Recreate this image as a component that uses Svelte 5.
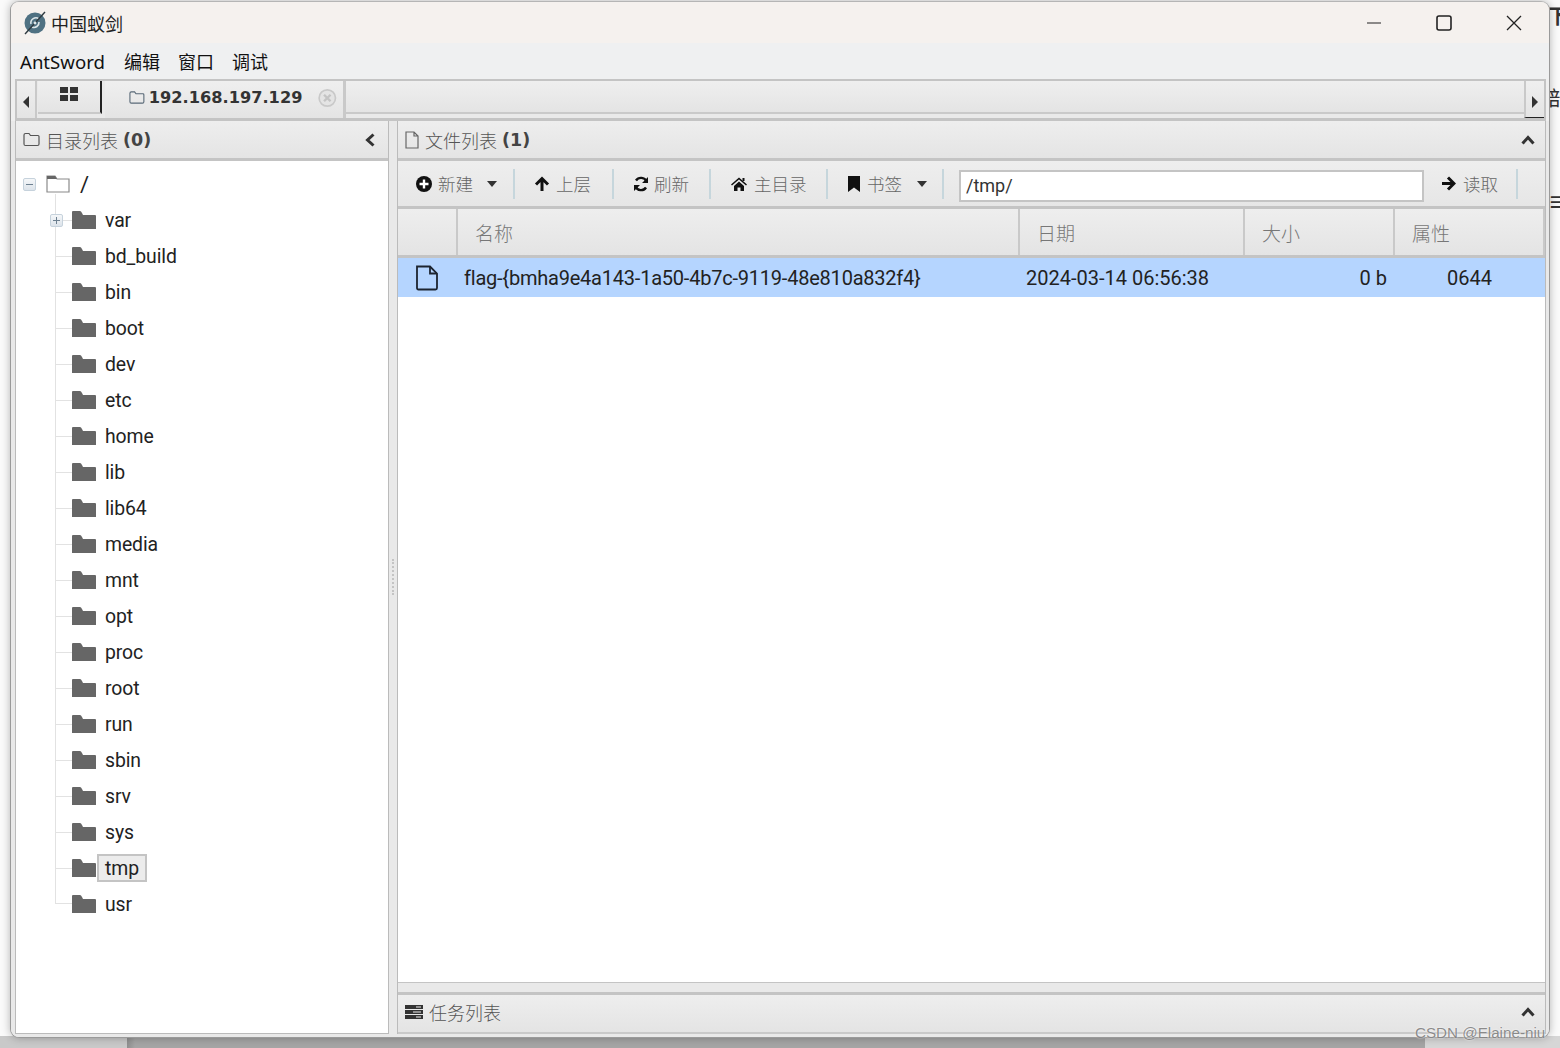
<script>
  const dirs = ['var','bd_build','bin','boot','dev','etc','home','lib','lib64','media','mnt','opt','proc','root','run','sbin','srv','sys','tmp','usr']
  const columns = ['', '名称', '日期', '大小', '属性']
</script>

<div class="desk">
  <div class="peek p1">下</div>
  <div class="peek p2">部</div>
  <div class="peek p3">≡</div>
  <div class="strip"></div>

  <div class="window">
    <div class="titlebar">
      <svg class="logo" viewBox="0 0 24 24" width="24" height="24">
        <circle cx="12" cy="12" r="10.5" fill="#4f7182"/>
        <path d="M8 13a5 5 0 0 1 8-5M16 11a5 5 0 0 1-7 5" fill="none" stroke="#dfe7ea" stroke-width="1.6"/>
        <path d="M2 23 22 1" stroke="#2f3a40" stroke-width="1.4"/>
        <circle cx="12" cy="12" r="1.4" fill="#dfe7ea"/>
      </svg>
      <span class="apptitle">中国蚁剑</span>
      <div class="controls">
        <svg viewBox="0 0 16 16" width="16" height="16"><path d="M1 8h14" stroke="#222" stroke-width="1.2"/></svg>
        <svg viewBox="0 0 16 16" width="16" height="16"><rect x="1" y="1" width="14" height="14" rx="2" fill="none" stroke="#222" stroke-width="1.6"/></svg>
        <svg viewBox="0 0 16 16" width="16" height="16"><path d="M1 1l14 14M15 1 1 15" stroke="#222" stroke-width="1.3"/></svg>
      </div>
    </div>

    <div class="menubar">
      <span class="first">AntSword</span><span>编辑</span><span>窗口</span><span>调试</span>
    </div>

    <div class="tabbar">
      <div class="tabarrow"><svg viewBox="0 0 6 12" width="6" height="12"><path d="M6 0v12L0 6z" fill="#333"/></svg></div>
      <div class="tab home">
        <svg viewBox="0 0 18 16" width="18" height="16"><path d="M0 1h8v6H0zM10 1h8v6h-8zM0 9h8v6H0zM10 9h8v6h-8z" fill="#333"/></svg>
      </div>
      <div class="tab active">
        <svg viewBox="0 0 17 15" width="17" height="15"><path d="M1 3q0-1.500 1.500-1.500H6L7.500 3.500H15q1 0 1 1V12q0 1.500-1.500 1.500h-12Q1 13.500 1 12z" fill="none" stroke="#5a6a78" stroke-width="1.200"/></svg>
        <b>192.168.197.129</b>
        <svg class="tabclose" viewBox="0 0 20 20" width="20" height="20"><circle cx="10" cy="10" r="8.800" fill="#e4e4e4" stroke="#c9c9c9" stroke-width="1.800"/><path d="M6.500 6.500l7 7M13.500 6.500l-7 7" stroke="#c4c4c4" stroke-width="2.600"/></svg>
      </div>
      <div class="tabfill"></div>
      <div class="tabarrow next"><svg viewBox="0 0 6 12" width="6" height="12"><path d="M0 0v12l6-6z" fill="#333"/></svg></div>
    </div>

    <div class="panes">
      <section class="dirpane">
        <header class="panehead">
          <svg viewBox="0 0 17 15" width="17" height="15"><path d="M1 3q0-1.500 1.500-1.500H6L7.500 3.500H15q1 0 1 1V12q0 1.500-1.500 1.500h-12Q1 13.500 1 12z" fill="none" stroke="#555" stroke-width="1.200"/></svg>
          <span class="cjk">目录列表</span> <b>(0)</b>
          <svg class="headarrow back" viewBox="0 0 12 14" width="12" height="14"><path d="M9.500 1.500 3.500 7l6 5.500" fill="none" stroke="#333" stroke-width="3"/></svg>
        </header>
        <div class="tree">
          <div class="root">
            <span class="box minus"></span>
            <svg class="rootfolder" viewBox="0 0 24 18" width="24" height="18"><path d="M1 17V1h8l2 3h12v13z" fill="#fff" stroke="#8a8a8a" stroke-width="1.200"/><path d="M1 1h8l2 3H1z" fill="#666"/></svg>
            <span class="name">/</span>
          </div>
          <div class="items">
            {#each dirs as d, i}
              <div class="row" class:lastrow={i === dirs.length - 1}>
                <span class="elbow"></span>
                {#if i === 0}<span class="box plus"></span>{/if}
                <svg class="folder" viewBox="0 0 24 18" width="24" height="18"><path d="M0 18V1q0-1 1-1h7q1 0 2 2l1 2h12q1 0 1 1v13z" fill="#666"/></svg>
                <span class="name" class:sel={d === 'tmp'}>{d}</span>
              </div>
            {/each}
          </div>
        </div>
      </section>

      <div class="gutter"><span class="grip"></span></div>

      <section class="filepane">
        <header class="panehead">
          <svg viewBox="0 0 14 18" width="14" height="18"><path d="M1 1h8l4 4v12H1zM9 1v4h4" fill="none" stroke="#666" stroke-width="1.200"/></svg>
          <span class="cjk">文件列表</span> <b>(1)</b>
          <svg class="headarrow" viewBox="0 0 14 12" width="14" height="12"><path d="M1.500 9.500 7 3.500l5.500 6" fill="none" stroke="#333" stroke-width="3"/></svg>
        </header>

        <div class="toolbar">
          <div class="tool t1">
            <svg viewBox="0 0 16 16" width="16" height="16"><circle cx="8" cy="8" r="8" fill="#111"/><path d="M8 3.500v9M3.500 8h9" stroke="#fff" stroke-width="2.400"/></svg>
            <span>新建</span>
            <svg class="caret" viewBox="0 0 10 6" width="10" height="6"><path d="M0 0h10L5 6z" fill="#333"/></svg>
          </div>
          <div class="tool t2">
            <svg viewBox="0 0 16 16" width="16" height="16"><path d="M8 15V3M2 8.500 8 2.500l6 6" fill="none" stroke="#111" stroke-width="3"/></svg>
            <span>上层</span>
          </div>
          <div class="tool t3">
            <svg viewBox="0 0 16 16" width="16" height="16"><path d="M13.500 5.500A6 6 0 0 0 3 4.500M2.500 10.500A6 6 0 0 0 13 11.500" fill="none" stroke="#111" stroke-width="2.400"/><path d="M15 1v6H9zM1 15V9h6z" fill="#111"/></svg>
            <span>刷新</span>
          </div>
          <div class="tool t4">
            <svg viewBox="0 0 16 14" width="16" height="14"><path d="M0 7.500 8 .5l8 7-1 1-7-6-7 6zM3 9l5-4.500L13 9v5H9.500v-3.500h-3V14H3z" fill="#111"/><path d="M11.500 1h2v3h-2z" fill="#111"/></svg>
            <span>主目录</span>
          </div>
          <div class="tool t5">
            <svg viewBox="0 0 12 16" width="12" height="16"><path d="M0 0h12v16L6 11.500 0 16z" fill="#111"/></svg>
            <span>书签</span>
            <svg class="caret" viewBox="0 0 10 6" width="10" height="6"><path d="M0 0h10L5 6z" fill="#333"/></svg>
          </div>
          <input class="path" value="/tmp/" readonly />
          <div class="tool t6">
            <svg viewBox="0 0 15 15" width="15" height="15"><path d="M1 7.500h11M7 1.500l6 6-6 6" fill="none" stroke="#111" stroke-width="3"/></svg>
            <span>读取</span>
          </div>
        </div>

        <div class="gridhead">
          {#each columns as c}<div class="hcell">{c}</div>{/each}
        </div>
        <div class="gridrow">
          <div class="fileicon">
            <svg viewBox="0 0 24 26" width="24" height="26"><path d="M2 1.500h13l7 7V23q0 1.500-1.500 1.500h-17Q2 24.500 2 23z" fill="none" stroke="#1c2430" stroke-width="1.800"/><path d="M15 1.500v7h7" fill="none" stroke="#1c2430" stroke-width="1.800"/></svg>
          </div>
          <div class="fname">flag-&#123;bmha9e4a143-1a50-4b7c-9119-48e810a832f4&#125;</div>
          <div class="fdate">2024-03-14 06:56:38</div>
          <div class="fsize">0 b</div>
          <div class="fattr">0644</div>
        </div>
        <div class="gridbody"></div>

        <div class="taskgap"></div>
        <footer class="panehead task">
          <svg viewBox="0 0 18 14" width="18" height="14"><path d="M0 0h18v4H0zM0 5h18v4H0zM0 10h18v4H0z" fill="#333"/><path d="M11 1.500h5v1h-5zM8 6.500h8v1H8zM11 11.500h5v1h-5z" fill="#eee"/></svg>
          <span class="cjk">任务列表</span>
          <svg class="headarrow" viewBox="0 0 14 12" width="14" height="12"><path d="M1.500 9.500 7 3.500l5.500 6" fill="none" stroke="#333" stroke-width="3"/></svg>
        </footer>
      </section>
    </div>
  </div>

  <div class="mark">CSDN @Elaine-niu</div>
</div>

<style>
  :global(body) {
    margin: 0;
    background: #fff;
  }

  .desk {
    position: relative;
    width: 1560px;
    height: 1048px;
    overflow: hidden;
    background: #fafafa;
    padding: 1px 10px 0;
    box-sizing: border-box;
    font-family: "Roboto", "Noto Sans CJK SC", sans-serif;
  }

  .strip {
    position: absolute;
    left: 0;
    right: 0;
    top: 1036px;
    height: 12px;
    background: linear-gradient(90deg, #c9c9c9 127px, #8f8f8f 127px, #a5a5a5 135px, #a5a5a5 1425px, #d6d6d6 1425px);
  }

  .peek {
    position: absolute;
    left: 1548px;
    color: #333;
    font-family: "Noto Sans CJK SC", sans-serif;
    font-size: 20px;
    line-height: 24px;
  }
  .p1 { top: 4px; font-weight: 700; }
  .p2 { top: 86px; }
  .p3 { top: 190px; font-weight: 700; }

  .window {
    position: relative;
    width: 1540px;
    height: 1037px;
    box-sizing: border-box;
    display: flex;
    flex-direction: column;
    background: #efefef;
    border: 1px solid #9a9a9a;
    border-top-color: #b5b5b5;
    border-radius: 9px;
    overflow: hidden;
    box-shadow: 0 0 8px rgba(0, 0, 0, 0.28);
  }

  .titlebar {
    height: 41px;
    flex: none;
    display: flex;
    align-items: center;
    background: #f5f1ee;
    padding-left: 12px;
  }
  .logo { margin-right: 4px; }
  .apptitle {
    font-family: "Noto Sans CJK SC", sans-serif;
    font-size: 18px;
    color: #222;
  }
  .controls {
    margin-left: auto;
    display: flex;
    gap: 54px;
    padding-right: 27px;
  }

  .menubar {
    height: 36px;
    flex: none;
    display: flex;
    align-items: center;
    padding-left: 9px;
    background: #eff0f1;
    font-family: "Noto Sans", "Noto Sans CJK SC", sans-serif;
    font-size: 18px;
    color: #111;
  }
  .menubar span { margin-right: 18px; }
  .menubar .first { font-size: 18.600px; margin-right: 19px; }

  .tabbar {
    height: 42px;
    flex: none;
    margin: 0 3px 0 4px;
    box-sizing: border-box;
    border: 2px solid #c4c4c4;
    border-bottom-width: 3px;
    display: flex;
    background: #e9e9e9;
  }
  .tabarrow {
    width: 20px;
    flex: none;
    display: flex;
    align-items: center;
    justify-content: center;
    padding-top: 5px;
    box-sizing: border-box;
    background: linear-gradient(#efefef, #e4e4e4);
    border-right: 2px solid #c9c9c9;
  }
  .tabarrow.next {
    border-right: 0;
    border-left: 2px solid #c9c9c9;
    border-bottom: 1px solid #222;
  }
  .tab {
    display: flex;
    align-items: center;
    background: linear-gradient(#efefef, #e4e4e4);
  }
  .tab.home {
    width: 64px;
    justify-content: center;
    margin-bottom: 4px;
    border-bottom: 2px solid #c9c9c9;
    border-right: 2px solid #222;
    box-sizing: border-box;
    padding-bottom: 5px;
    margin-left: 1px;
  }
  .tab.active {
    width: 241px;
    box-sizing: border-box;
    margin-left: 3px;
    padding: 0 6px 4px 24px;
    gap: 4px;
    border-right: 3px solid #c9c9c9;
    color: #333;
  }
  .tab.active b {
    font-family: "DejaVu Sans", sans-serif;
    font-size: 16.200px;
    font-weight: 700;
  }
  .tabclose { margin-left: 12px; }
  .tabfill {
    flex: 1;
    margin-bottom: 4px;
    background: linear-gradient(#efefef, #e4e4e4);
    border-bottom: 2px solid #c9c9c9;
  }

  .panes {
    flex: 1;
    min-height: 0;
    display: flex;
    padding: 0 3px 3px 4px;
    background: #e9e9e9;
  }

  .dirpane {
    width: 374px;
    flex: none;
    display: flex;
    flex-direction: column;
    box-sizing: border-box;
    border-left: 1px solid #bbb;
    border-right: 1px solid #bbb;
    border-bottom: 1px solid #bbb;
    background: #fff;
  }

  .panehead {
    height: 40px;
    flex: none;
    box-sizing: border-box;
    display: flex;
    align-items: center;
    gap: 6px;
    padding-left: 7px;
    background: linear-gradient(#eeeeee, #e4e4e4);
    border-bottom: 3px solid #c4c4c4;
    font-size: 18px;
    color: #555;
  }
  .panehead b {
    font-family: "DejaVu Sans", sans-serif;
    font-size: 17.500px;
    color: #444;
    margin-left: -1px;
  }
  .cjk {
    font-family: "Noto Sans CJK SC", sans-serif;
    font-weight: 300;
    font-size: 18px;
  }
  .headarrow {
    margin-left: auto;
    margin-right: 10px;
  }
  .headarrow.back { margin-right: 12px; }

  .tree {
    flex: 1;
    padding: 5px 0 0 7px;
    font-size: 19.400px;
    letter-spacing: -0.100px;
    color: #222;
  }
  .root {
    height: 36px;
    display: flex;
    align-items: center;
  }
  .root .name {
    margin-left: 10px;
    font-size: 22px;
  }
  .box {
    width: 13px;
    height: 13px;
    box-sizing: border-box;
    border: 1px solid #c6d2dc;
    background: linear-gradient(#f5f7f9, #dce3ea);
    border-radius: 2px;
    position: relative;
    flex: none;
  }
  .box::before {
    content: '';
    position: absolute;
    left: 2px;
    right: 2px;
    top: 5px;
    height: 1px;
    background: #6d8090;
  }
  .plus::after {
    content: '';
    position: absolute;
    top: 2px;
    bottom: 2px;
    left: 5px;
    width: 1px;
    background: #6d8090;
  }
  .minus { margin-right: 10px; }
  .items { position: relative; }
  .row {
    position: relative;
    height: 36px;
    display: flex;
    align-items: center;
    padding-left: 49px;
  }
  .elbow {
    position: absolute;
    left: 32px;
    top: -8px;
    width: 17px;
    height: 26px;
    box-sizing: border-box;
    border-left: 1px solid #e2e2e2;
    border-bottom: 1px solid #e2e2e2;
  }
  .row:not(.lastrow) .elbow { height: 44px; border-bottom: 0; }
  .row:not(.lastrow)::after {
    content: '';
    position: absolute;
    left: 33px;
    top: 18px;
    width: 16px;
    height: 1px;
    background: #e2e2e2;
  }
  .row .box {
    position: absolute;
    left: 27px;
    top: 12px;
    z-index: 1;
  }
  .row .name {
    margin-left: 1px;
    padding: 0 6px;
    height: 28px;
    line-height: 26px;
    box-sizing: border-box;
    border: 2px solid transparent;
  }
  .row .sel {
    background: #ececec;
    border-color: #c4c4c4;
  }

  .gutter {
    width: 8px;
    flex: none;
    position: relative;
  }
  .grip {
    position: absolute;
    left: 3px;
    top: 438px;
    height: 36px;
    width: 2px;
    border-left: 2px dotted #c4c4c4;
  }

  .filepane {
    flex: 1;
    min-width: 0;
    display: flex;
    flex-direction: column;
    border-left: 1px solid #bbb;
    border-right: 1px solid #bbb;
    background: #fff;
  }

  .toolbar {
    height: 48px;
    flex: none;
    box-sizing: border-box;
    display: flex;
    align-items: center;
    background: linear-gradient(#eeeeee, #e6e6e6);
    border-bottom: 3px solid #c4c4c4;
  }
  .tool {
    height: 30px;
    box-sizing: border-box;
    display: flex;
    align-items: center;
    gap: 6px;
    border-right: 2px solid #c6d6dc;
    font-family: "Noto Sans CJK SC", sans-serif;
    font-weight: 300;
    font-size: 17.500px;
    color: #666;
  }
  .caret { margin-left: 8px; }
  .t1 { width: 117px; padding-left: 18px; }
  .t2 { width: 99px; padding-left: 19px; }
  .t3 { width: 97px; padding-left: 19px; gap: 5px; }
  .t4 { width: 117px; padding-left: 20px; gap: 7px; }
  .t5 { width: 116px; padding-left: 20px; gap: 7px; }
  .t6 { width: 94px; padding-left: 17px; gap: 7px; }
  .path {
    width: 465px;
    height: 32px;
    margin: 4px 0 0 15px;
    padding: 0 5px;
    box-sizing: border-box;
    border: 2px solid #c4c4c4;
    outline: 0;
    background: #fff;
    font-family: "Roboto", sans-serif;
    font-size: 18px;
    color: #333;
  }

  .gridhead {
    height: 49px;
    flex: none;
    box-sizing: border-box;
    display: grid;
    grid-template-columns: 60px 562px 225px 150px 1fr;
    border-bottom: 3px solid #c4c4c4;
    background: linear-gradient(#eeeeee, #e4e4e4);
  }
  .hcell {
    display: flex;
    align-items: center;
    padding-left: 17px;
    border-right: 2px solid #c9c9c9;
    font-family: "Noto Sans CJK SC", sans-serif;
    font-weight: 300;
    font-size: 19px;
    color: #777;
  }
  .gridrow {
    height: 39px;
    flex: none;
    display: grid;
    grid-template-columns: 66px 561px 224px 150px 1fr;
    align-items: center;
    background: #b5d5ff;
    font-size: 20px;
    color: #222;
  }
  .fileicon {
    display: flex;
    padding-left: 17px;
  }
  .fname { letter-spacing: -0.220px; }
  .fdate { padding-left: 1px; }
  .fsize {
    text-align: right;
    padding-right: 12px;
    margin-left: -36px;
  }
  .fattr { padding-left: 48px; }
  .gridbody { flex: 1; }

  .taskgap {
    height: 9px;
    flex: none;
    background: #e9e9e9;
    border-top: 1px solid #c4c4c4;
  }
  .task {
    height: 42px;
    padding-bottom: 3px;
    border-top: 3px solid #c4c4c4;
    border-bottom: 2px solid #c9c9c9;
  }
  .task .cjk { color: #555; }

  .mark {
    position: absolute;
    left: 1415px;
    top: 1023px;
    font-family: "Liberation Sans", sans-serif;
    font-size: 15.200px;
    line-height: 20px;
    color: rgba(120, 120, 120, 0.85);
    text-shadow: 0 0 2px #fff;
  }
</style>
